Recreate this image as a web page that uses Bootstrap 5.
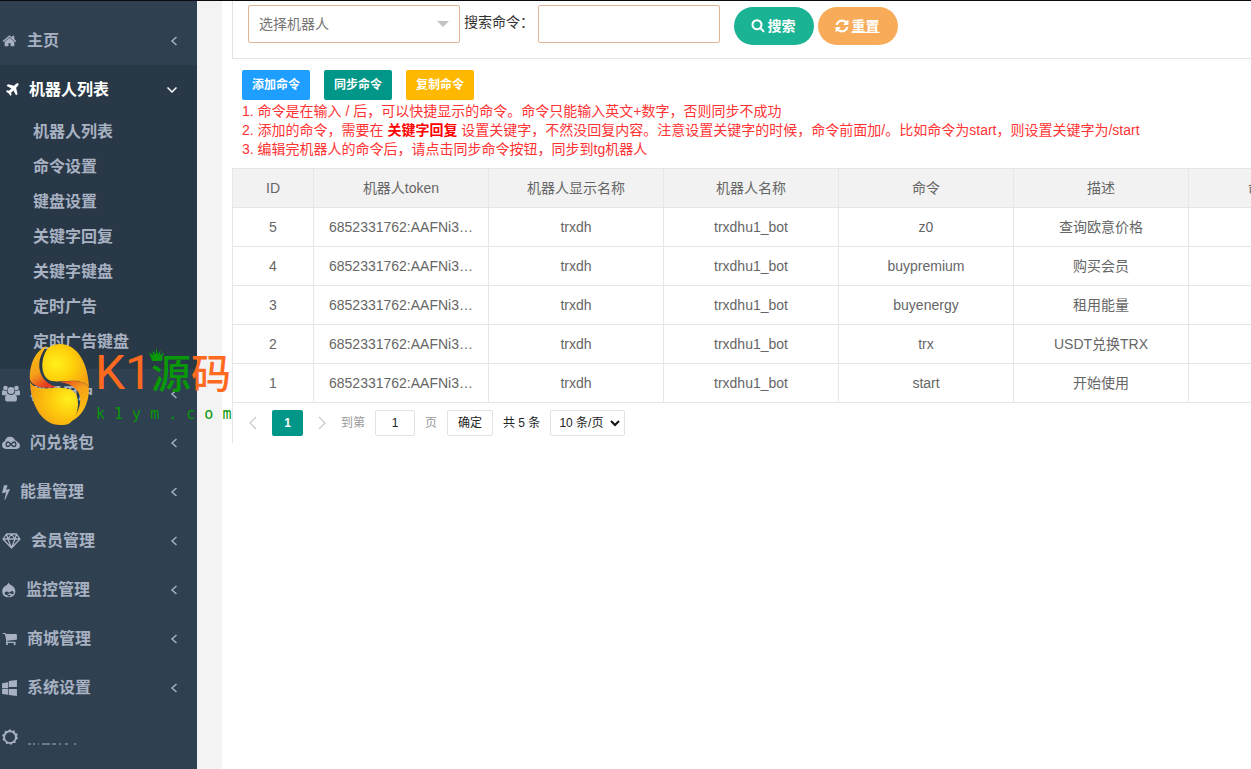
<!DOCTYPE html>
<html lang="zh-CN">
<head>
<meta charset="utf-8">
<meta name="viewport" content="width=device-width, initial-scale=1">
<title>命令设置</title>
<link href="https://cdn.jsdelivr.net/npm/bootstrap@5.3.0/dist/css/bootstrap.min.css" rel="stylesheet">
<style>
body{font-family:"Liberation Sans","Noto Sans CJK SC",sans-serif;font-size:14px;line-height:19px;color:#333;background:#fff;overflow:hidden}
.shell{min-height:100vh;border-top:1px solid #0b0a12}
.side{width:197px;background:#2f4050;padding-top:15px;font-size:16px;font-weight:600;position:relative}
.side a{color:#a7b1c2;text-decoration:none}
.side-link{height:49px;gap:10px;padding:0 19px 0 2px}
.side-link svg{fill:currentColor;flex:none}
.side-link .arrow{fill:none;stroke:currentColor;stroke-width:1.5;margin-left:auto}
.side-open{background:#293846;padding-bottom:10px}
.side .side-open>.side-link{color:#fff;padding-left:4px}
.side-open>.side-link{gap:9px}
.side-open li a{display:flex;align-items:center;height:35px;padding-left:33px}
.gutter{width:25px;background:#f3f3f4}
.page-main{min-width:0;overflow:hidden;padding-left:10px}
.search-bar{border:1px solid #e3e3e3;border-width:0 0 1px 1px;height:58px;padding:4px 0 0 15px}
.field{height:38px;border:1px solid #e0b597;border-radius:2px;background:#fff;color:#757575;padding:0 10px}
.bot-pick{width:212px;appearance:none;background:#fff url("data:image/svg+xml,%3Csvg xmlns='http://www.w3.org/2000/svg' width='12' height='6'%3E%3Cpath d='M0 0h12L6 6z' fill='%23c2c2c2'/%3E%3C/svg%3E") no-repeat right 10px center}
.cmd-label{width:74px}
.cmd-input{width:182px}
.pill{width:80px;height:38px;border-radius:19px;color:#fff;font-size:14px;font-weight:700;gap:3px;padding:0 2px 0 0;border:0;margin-top:2px}
.pill svg{fill:#fff}
.pill-go{background:#1ab394;margin-left:14px}.pill-reset{background:#f8ac59}
.tools{gap:14px;padding:11px 0 0 10px}
.tool{width:68px;height:30px;border:0;border-radius:2px;color:#fff;font-size:12px;font-weight:600;padding:0}
.tool-add{background:#1e9fff}.tool-sync{background:#009688}.tool-copy{background:#ffb800}
.hints{color:#f33;line-height:19px;margin:2px 0 9px 10px;white-space:nowrap}
.hints b{color:#f00}
.grid-wrap{border-left:1px solid #e6e6e6}
.cmds{table-layout:fixed;width:1131px;border-collapse:separate;border-spacing:0;color:#666;text-align:center;border-top:1px solid #e6e6e6}
.cmds th,.cmds td{height:39px;padding:0 10px;border:solid #e6e6e6;border-width:0 1px 1px 0;font-weight:400;text-align:center;white-space:nowrap}
.cmds th{background:#f2f2f2}
.cmds .id-col{width:81px}
.pager{height:40px;font-size:12px;gap:10px;padding-left:15px;color:#999}
.pager svg{fill:none;stroke:#ccc;stroke-width:1.4}
.pager input,.pager select,.pager button{height:26px;border:1px solid #e2e2e2;border-radius:2px;background:#fff;color:#222;font-size:12px;padding:0}
.pager .now{width:31px;background:#009688;border:0;color:#fff;font-weight:700}
.pager input{width:40px}
.pager .go{width:46px}
.pager .per{width:75px;appearance:none;padding-left:8px;background:#fff url("data:image/svg+xml,%3Csvg xmlns='http://www.w3.org/2000/svg' width='10' height='7'%3E%3Cpath d='M1 1l4 4 4-4' fill='none' stroke='%23111' stroke-width='2'/%3E%3C/svg%3E") no-repeat right 4px center}
/* site mark floats over the menu */
.site-mark{position:absolute;left:29px;top:341px;width:206px;z-index:5;font-weight:400;pointer-events:none}
.mark-name{line-height:64px;height:62px;color:#ff6a1f;font-size:40px;font-weight:500}
.mark-k{font:400 48px/62px Roboto,sans-serif;width:60px;padding-left:4px}
.mark-green,.mark-url{color:#089808}
.mark-crown{position:absolute;top:5px;left:-2px}
.mark-url{font:15px/20px "DejaVu Sans Mono",monospace;white-space:nowrap;padding-left:5px}
</style>
</head>
<body>
<svg class="d-none">
<symbol id="left" viewBox="0 0 8 10"><path d="M6.500 1 2 5l4.500 4"/></symbol>
</svg>
<div class="shell d-flex">
<nav class="side flex-shrink-0">
  <a href="#" class="side-link d-flex align-items-center"><svg width="15" height="16" viewBox="0 0 1792 1792"><path d="M1472 992v480q0 26-19 45t-45 19h-384v-384h-256v384h-384q-26 0-45-19t-19-45v-480q0-1 .5-3t.5-3l575-474 575 474q1 2 1 6zm223-69l-62 74q-8 9-21 11h-3q-13 0-21-7l-692-577-692 577q-12 8-24 7-13-2-21-11l-62-74q-8-10-7-23.500t11-21.500l719-599q32-26 76-26t76 26l244 204v-195q0-14 9-23t23-9h192q14 0 23 9t9 23v408l219 182q10 8 11 21.500t-7 23.500z"/></svg>主页<svg class="arrow" width="8" height="10"><use href="#left"/></svg></a>
  <div class="side-open">
    <a href="#" class="side-link d-flex align-items-center"><svg width="16" height="16" viewBox="0 0 1700 1792"><path d="M1568 160q44 52 12 148t-108 172l-161 161 160 696q5 19-12 33l-128 96q-7 6-19 6-4 0-7-1-15-3-21-16l-279-508-259 259 53 194q5 17-8 31l-96 96q-9 9-23 9h-2q-15-2-24-13l-189-252-252-189q-11-7-13-23-1-13 9-25l96-97q9-9 23-9 6 0 8 1l194 53 259-259-508-279q-14-8-17-24-2-16 9-27l128-128q14-13 30-8l665 159 160-160q76-76 172-108t148 12z"/></svg>机器人列表<svg class="arrow" width="12" height="8" viewBox="0 0 12 8"><path d="M1.500 1.500 6 6l4.500-4.500"/></svg></a>
    <ul class="list-unstyled m-0">
      <li><a href="#">机器人列表</a></li>
      <li><a href="#">命令设置</a></li>
      <li><a href="#">键盘设置</a></li>
      <li><a href="#">关键字回复</a></li>
      <li><a href="#">关键字键盘</a></li>
      <li><a href="#">定时广告</a></li>
      <li><a href="#">定时广告键盘</a></li>
    </ul>
  </div>
  <a href="#" class="side-link d-flex align-items-center"><svg width="18" height="17" viewBox="0 0 18 17"><circle cx="3.500" cy="3" r="2.300"/><circle cx="14.500" cy="3" r="2.300"/><circle cx="9" cy="5.500" r="3.400"/><path d="M0 10V7q0-2 1.500-2Q3 6.500 4.800 5.500 4.800 8 6 9q-2 0-3 1.500zM18 10V7q0-2-1.500-2-1.500 1.500-3.300.5 0 2.500-1.200 3.500 2 0 3 1.500zM3 14q0-4.500 3-5 3 2 6 0 3 .5 3 5 0 2.500-2 2.500H5Q3 16.500 3 14z"/></svg>群组用户<svg class="arrow" width="8" height="10"><use href="#left"/></svg></a>
  <a href="#" class="side-link d-flex align-items-center"><svg width="18" height="14" viewBox="0 0 18 14"><path d="M4 13Q0 12.500 0 9q0-3 3-4Q3.500 1 8 .8q4 0 5 3.700 1.500-.5 2.500 1.500Q18 7 18 9.500q0 3-3.500 3.500z"/><path d="M9 8.500C7.500 6.500 6.800 6 6 6 3.500 6 3.500 10.500 6 10.500 8 10.500 10 6 12 6c2.500 0 2.500 4.500 0 4.500-.8 0-1.500-.5-3-2z" style="fill:none;stroke:#2f4050;stroke-width:1.300"/></svg>闪兑钱包<svg class="arrow" width="8" height="10"><use href="#left"/></svg></a>
  <a href="#" class="side-link d-flex align-items-center"><svg width="8" height="16" viewBox="430 0 920 1792"><path d="M1333 566q18 20 7 44l-540 1157q-13 25-42 25-4 0-14-2-17-5-25.500-19t-4.500-30l197-808-406 101q-4 1-12 1-18 0-31-11-18-15-13-39l201-825q4-14 16-23t28-9h328q19 0 32 12.500t13 29.500q0 8-5 18l-171 463 396-98q8-2 12-2 19 0 34 15z"/></svg>能量管理<svg class="arrow" width="8" height="10"><use href="#left"/></svg></a>
  <a href="#" class="side-link d-flex align-items-center"><svg width="19" height="16" viewBox="0 0 19 16"><path d="M4.500 1h10L18 6l-8.500 9L1 6zM1 6h17M4.500 1 6 6l3.500 9L13 6l1.500-5M6 6l3.500-5L13 6" style="fill:none;stroke:#a7b1c2;stroke-width:1.300;stroke-linejoin:round"/></svg>会员管理<svg class="arrow" width="8" height="10"><use href="#left"/></svg></a>
  <a href="#" class="side-link d-flex align-items-center"><svg width="14" height="16" viewBox="0 0 15 16"><path d="M7 0q1 2 3 3 4.300 2.300 4.300 6.500Q14 15.500 7.200 15.800.3 15.500.2 9.500.2 5.500 4 3.500 6.500 2 7 0z"/><path d="M2.800 11.500q0-2 2-2 1.200 0 2.700 1.500 2-2 3.500-2 1.800.3 1.500 2.500-.5 1.500-2 .8-1.500-1.300-3-.3-2 1.500-3.500 1.200-1.200-.4-1.200-1.700zM5 14.200q2.500 1.300 5 0-2.500-1.600-5 0z" fill="#2f4050"/></svg>监控管理<svg class="arrow" width="8" height="10"><use href="#left"/></svg></a>
  <a href="#" class="side-link d-flex align-items-center"><svg width="15" height="16" viewBox="0 100 1740 1700"><path d="M704 1536q0 52-38 90t-90 38-90-38-38-90 38-90 90-38 90 38 38 90zm896 0q0 52-38 90t-90 38-90-38-38-90 38-90 90-38 90 38 38 90zm128-1088v512q0 24-16.500 42.500t-40.500 21.500l-1044 122q13 60 13 70 0 16-24 64h920q26 0 45 19t19 45-19 45-45 19h-1024q-26 0-45-19t-19-45q0-11 8-31.500t16-36 21.500-40 15.500-29.500l-177-823h-204q-26 0-45-19t-19-45 19-45 45-19h256q16 0 28.500 6.500t19.500 15.500 13 24.500 8 26 5.500 29.500 4.500 26h1201q26 0 45 19t19 45z"/></svg>商城管理<svg class="arrow" width="8" height="10"><use href="#left"/></svg></a>
  <a href="#" class="side-link d-flex align-items-center"><svg width="15" height="16" viewBox="0 0 1664 1792"><path d="M682 1006v651l-682-94v-557h682zm0-743v659h-682v-565zm982 743v786l-907-125v-661h907zm0-1006v794h-907v-669z"/></svg>系统设置<svg class="arrow" width="8" height="10"><use href="#left"/></svg></a>
  <a href="#" class="side-link d-flex align-items-center" aria-label="更多"><svg width="16" height="16" viewBox="0 0 16 16"><path d="M8 0l1.800 2 2.700-.8.6 2.700 2.700.8L15 7.500 16 9.500l-2.300 1.700-.2 2.700-2.700.2L9 16l-2-1.500-2.700.5-1-2.600L.5 11l.8-2.700L0 6l2.500-1.500.5-2.700 2.700.2z"/><circle cx="8" cy="8.200" r="5" fill="#2f4050"/></svg><svg width="52" height="16" viewBox="0 0 52 16"><path d="M0 15h3m2 0h2m3 0h1m3 0h8m2 0h4m3 0h2m4 0h3m6 0h2" stroke="#a7b1c2"/></svg></a>

  <div class="site-mark d-flex">
    <svg width="62" height="84" viewBox="0 0 62 84" class="flex-shrink-0">
      <defs>
        <radialGradient id="gold" cx=".3" cy=".45" r=".75"><stop offset="0" stop-color="#fff01c"/><stop offset=".5" stop-color="#ffd00a"/><stop offset="1" stop-color="#f5a012"/></radialGradient>
        <radialGradient id="gold2" cx=".8" cy=".4" r=".8"><stop offset="0" stop-color="#fff01c"/><stop offset=".5" stop-color="#fdc80c"/><stop offset="1" stop-color="#f5a012"/></radialGradient>
        <linearGradient id="flame" x2=".4" y2="1"><stop offset="0" stop-color="#ffc20d"/><stop offset=".65" stop-color="#f5a01a"/><stop offset="1" stop-color="#e8401e"/></linearGradient>
        <linearGradient id="flame2" x2=".4" y2="1"><stop offset="0" stop-color="#e8401e"/><stop offset=".4" stop-color="#f5a01a"/><stop offset="1" stop-color="#ffc20d"/></linearGradient>
      </defs>
      <path d="M1 40c4 7 14 7 24 6 15-1 24 2 24 15 0 9-3 16-8 20-3 2-6 2-10 2C14 83 2 65 1 40z" fill="url(#gold2)"/>
      <path d="M19 6C23 3 27 2 31 2c16 0 28 17 29 43-5-6-13-7-21-6-6 0-11 1-16 0C12 37 10 18 19 6z" fill="url(#gold)"/>
      <path d="M18 4C7 8 0 22 1 38c3 7 14 9 27 7C10 41 4 20 18 4z" fill="url(#flame)"/>
      <path d="M31 40c12-2 25-2 29 6 0 15-6 27-17 33 9-12 17-34-12-39z" fill="url(#flame2)"/>
    </svg>
    <div>
      <div class="mark-name d-flex"><span class="mark-k flex-shrink-0">K1</span><span class="position-relative text-nowrap"><svg class="mark-crown" width="15" height="15" viewBox="0 0 14 14" fill="#089808"><path d="M3 13 0 5l4 3-1-5 3 4 1-7 1 7 3-4-1 5 4-3-3 8z"/></svg><span class="mark-green">源</span>码</span></div>
      <div class="mark-url">k 1 y m . c o m</div>
    </div>
  </div>
</nav>
<div class="gutter flex-shrink-0"></div>
<main class="page-main flex-grow-1">
  <form class="search-bar d-flex align-items-start">
    <select class="field bot-pick" aria-label="选择机器人"><option>选择机器人</option></select>
    <label for="cmd" class="cmd-label ms-1 mt-2 text-nowrap">搜索命令：</label>
    <input id="cmd" class="field cmd-input" type="text">
    <button type="button" class="pill pill-go d-flex align-items-center justify-content-center"><svg width="14" height="14" viewBox="0 100 1792 1792"><path d="M1216 832q0-185-131.500-316.500t-316.500-131.500-316.500 131.500-131.500 316.500 131.500 316.500 316.500 131.500 316.500-131.500 131.500-316.500zm512 832q0 52-38 90t-90 38q-54 0-90-38l-343-342q-179 124-399 124-143 0-273.500-55.500t-225-150-150-225-55.500-273.500 55.500-273.500 150-225 225-150 273.500-55.500 273.500 55.500 225 150 150 225 55.500 273.500q0 220-124 399l343 343q37 37 37 90z"/></svg>搜索</button>
    <a href="#" class="pill pill-reset ms-1 d-flex align-items-center justify-content-center text-decoration-none"><svg width="14" height="14" viewBox="64 64 1664 1664"><path d="M1639 1056q0 5-1 7-64 268-268 434.500t-478 166.500q-146 0-282.500-55t-243.500-157l-129 129q-19 19-45 19t-45-19-19-45v-448q0-26 19-45t45-19h448q26 0 45 19t19 45-19 45l-137 137q71 66 161 102t187 36q134 0 250-65t186-179q11-17 53-117 8-23 30-23h192q13 0 22.500 9.500t9.500 22.500zm25-800v448q0 26-19 45t-45 19h-448q-26 0-45-19t-19-45 19-45l138-138q-148-137-349-137-134 0-250 65t-186 179q-11 17-53 117-8 23-30 23h-199q-13 0-22.500-9.500t-9.500-22.500v-7q65-268 270-434.500t480-166.500q146 0 284 55.500t245 156.500l130-129q19-19 45-19t45 19 19 45z"/></svg><span class="text-decoration-underline">重置</span></a>
  </form>
  <div class="tools d-flex">
    <button type="button" class="tool tool-add">添加命令</button>
    <button type="button" class="tool tool-sync">同步命令</button>
    <button type="button" class="tool tool-copy">复制命令</button>
  </div>
  <div class="hints">
    <div>1. 命令是在输入 / 后，可以快捷显示的命令。命令只能输入英文+数字，否则同步不成功</div>
    <div>2. 添加的命令，需要在 <b>关键字回复</b> 设置关键字，不然没回复内容。注意设置关键字的时候，命令前面加/。比如命令为start，则设置关键字为/start</div>
    <div>3. 编辑完机器人的命令后，请点击同步命令按钮，同步到tg机器人</div>
  </div>
  <div class="grid-wrap">
    <table class="cmds">
      <colgroup><col class="id-col"><col><col><col><col><col><col></colgroup>
      <thead><tr><th>ID</th><th>机器人token</th><th>机器人显示名称</th><th>机器人名称</th><th>命令</th><th>描述</th><th>命令类型</th></tr></thead>
      <tbody>
        <tr><td>5</td><td>6852331762:AAFNi3…</td><td>trxdh</td><td>trxdhu1_bot</td><td>z0</td><td>查询欧意价格</td><td></td></tr>
        <tr><td>4</td><td>6852331762:AAFNi3…</td><td>trxdh</td><td>trxdhu1_bot</td><td>buypremium</td><td>购买会员</td><td></td></tr>
        <tr><td>3</td><td>6852331762:AAFNi3…</td><td>trxdh</td><td>trxdhu1_bot</td><td>buyenergy</td><td>租用能量</td><td></td></tr>
        <tr><td>2</td><td>6852331762:AAFNi3…</td><td>trxdh</td><td>trxdhu1_bot</td><td>trx</td><td>USDT兑换TRX</td><td></td></tr>
        <tr><td>1</td><td>6852331762:AAFNi3…</td><td>trxdh</td><td>trxdhu1_bot</td><td>start</td><td>开始使用</td><td></td></tr>
      </tbody>
    </table>
    <div class="pager d-flex align-items-center">
      <svg width="10" height="14" viewBox="0 0 10 14"><path d="M8 1 2 7l6 6"/></svg>
      <button type="button" class="now ms-1">1</button>
      <svg class="ms-1" width="10" height="14" viewBox="0 0 10 14"><path d="m2 1 6 6-6 6"/></svg>
      <label for="pg" class="ms-1">到第</label>
      <input id="pg" class="text-center" type="text" value="1">
      <span>页</span>
      <button type="button" class="go">确定</button>
      <span class="text-dark">共 5 条</span>
      <select class="per" aria-label="每页条数"><option>10 条/页</option></select>
    </div>
  </div>
</main>
</div>
<script src="https://cdn.jsdelivr.net/npm/bootstrap@5.3.0/dist/js/bootstrap.bundle.min.js"></script>
</body>
</html>
